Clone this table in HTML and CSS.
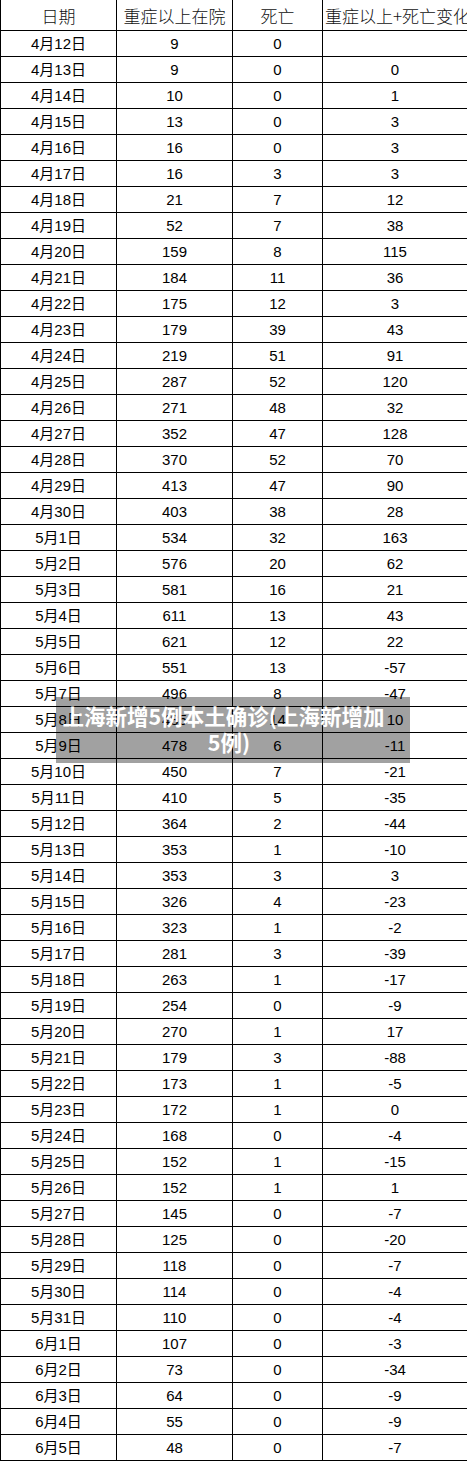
FILE: index.html
```html
<!DOCTYPE html>
<html lang="zh">
<head>
<meta charset="utf-8">
<link rel="stylesheet" href="styles.css">
</head>
<body>
<div class="page">
<table class="data">
<colgroup><col class="c1"><col class="c2"><col class="c3"><col class="c4"></colgroup>
<thead>
<tr><th>日期</th><th>重症以上在院</th><th>死亡</th><th class="last"><div class="clip">重症以上+死亡变化</div></th></tr>
</thead>
<tbody>
<tr><td>4月12日</td><td>9</td><td>0</td><td></td></tr>
<tr><td>4月13日</td><td>9</td><td>0</td><td>0</td></tr>
<tr><td>4月14日</td><td>10</td><td>0</td><td>1</td></tr>
<tr><td>4月15日</td><td>13</td><td>0</td><td>3</td></tr>
<tr><td>4月16日</td><td>16</td><td>0</td><td>3</td></tr>
<tr><td>4月17日</td><td>16</td><td>3</td><td>3</td></tr>
<tr><td>4月18日</td><td>21</td><td>7</td><td>12</td></tr>
<tr><td>4月19日</td><td>52</td><td>7</td><td>38</td></tr>
<tr><td>4月20日</td><td>159</td><td>8</td><td>115</td></tr>
<tr><td>4月21日</td><td>184</td><td>11</td><td>36</td></tr>
<tr><td>4月22日</td><td>175</td><td>12</td><td>3</td></tr>
<tr><td>4月23日</td><td>179</td><td>39</td><td>43</td></tr>
<tr><td>4月24日</td><td>219</td><td>51</td><td>91</td></tr>
<tr><td>4月25日</td><td>287</td><td>52</td><td>120</td></tr>
<tr><td>4月26日</td><td>271</td><td>48</td><td>32</td></tr>
<tr><td>4月27日</td><td>352</td><td>47</td><td>128</td></tr>
<tr><td>4月28日</td><td>370</td><td>52</td><td>70</td></tr>
<tr><td>4月29日</td><td>413</td><td>47</td><td>90</td></tr>
<tr><td>4月30日</td><td>403</td><td>38</td><td>28</td></tr>
<tr><td>5月1日</td><td>534</td><td>32</td><td>163</td></tr>
<tr><td>5月2日</td><td>576</td><td>20</td><td>62</td></tr>
<tr><td>5月3日</td><td>581</td><td>16</td><td>21</td></tr>
<tr><td>5月4日</td><td>611</td><td>13</td><td>43</td></tr>
<tr><td>5月5日</td><td>621</td><td>12</td><td>22</td></tr>
<tr><td>5月6日</td><td>551</td><td>13</td><td>-57</td></tr>
<tr><td>5月7日</td><td>496</td><td>8</td><td>-47</td></tr>
<tr><td>5月8日</td><td>485</td><td>14</td><td>10</td></tr>
<tr><td>5月9日</td><td>478</td><td>6</td><td>-11</td></tr>
<tr><td>5月10日</td><td>450</td><td>7</td><td>-21</td></tr>
<tr><td>5月11日</td><td>410</td><td>5</td><td>-35</td></tr>
<tr><td>5月12日</td><td>364</td><td>2</td><td>-44</td></tr>
<tr><td>5月13日</td><td>353</td><td>1</td><td>-10</td></tr>
<tr><td>5月14日</td><td>353</td><td>3</td><td>3</td></tr>
<tr><td>5月15日</td><td>326</td><td>4</td><td>-23</td></tr>
<tr><td>5月16日</td><td>323</td><td>1</td><td>-2</td></tr>
<tr><td>5月17日</td><td>281</td><td>3</td><td>-39</td></tr>
<tr><td>5月18日</td><td>263</td><td>1</td><td>-17</td></tr>
<tr><td>5月19日</td><td>254</td><td>0</td><td>-9</td></tr>
<tr><td>5月20日</td><td>270</td><td>1</td><td>17</td></tr>
<tr><td>5月21日</td><td>179</td><td>3</td><td>-88</td></tr>
<tr><td>5月22日</td><td>173</td><td>1</td><td>-5</td></tr>
<tr><td>5月23日</td><td>172</td><td>1</td><td>0</td></tr>
<tr><td>5月24日</td><td>168</td><td>0</td><td>-4</td></tr>
<tr><td>5月25日</td><td>152</td><td>1</td><td>-15</td></tr>
<tr><td>5月26日</td><td>152</td><td>1</td><td>1</td></tr>
<tr><td>5月27日</td><td>145</td><td>0</td><td>-7</td></tr>
<tr><td>5月28日</td><td>125</td><td>0</td><td>-20</td></tr>
<tr><td>5月29日</td><td>118</td><td>0</td><td>-7</td></tr>
<tr><td>5月30日</td><td>114</td><td>0</td><td>-4</td></tr>
<tr><td>5月31日</td><td>110</td><td>0</td><td>-4</td></tr>
<tr><td>6月1日</td><td>107</td><td>0</td><td>-3</td></tr>
<tr><td>6月2日</td><td>73</td><td>0</td><td>-34</td></tr>
<tr><td>6月3日</td><td>64</td><td>0</td><td>-9</td></tr>
<tr><td>6月4日</td><td>55</td><td>0</td><td>-9</td></tr>
<tr><td>6月5日</td><td>48</td><td>0</td><td>-7</td></tr>
</tbody>
</table>
<div class="caption"><div class="line1">上海新增5例本土确诊(上海新增加</div><div class="line2">5例)</div></div>
</div>
</body>
</html>
```

FILE: styles.css
```css
html, body {
  margin: 0;
  padding: 0;
  background: #ffffff;
}

.page {
  position: relative;
  width: 467px;
  height: 1461px;
  overflow: hidden;
}

.data {
  border-collapse: collapse;
  table-layout: fixed;
  width: 467px;
  font-family: "Liberation Sans", "Noto Sans CJK SC", sans-serif;
  font-size: 15px;
  color: #000;
}

.c1 { width: 116px; }
.c2 { width: 116px; }
.c3 { width: 90px; }
.c4 { width: 145px; }

.data th,
.data td {
  border: 1px solid #000;
  padding: 1px 0 0 0;
  text-align: center;
  vertical-align: middle;
  line-height: 18px;
}

.data thead tr { height: 30px; }
.data tbody tr { height: 26px; }

.data th {
  border-top: none;
  padding-top: 2px;
  font-family: "Noto Sans CJK SC", sans-serif;
  font-weight: 300;
  font-size: 17px;
  color: #111;
}

.data th.last {
  text-align: left;
  overflow: hidden;
}

.clip {
  white-space: nowrap;
  overflow: hidden;
  padding-left: 2px;
}

.caption {
  position: absolute;
  left: 56px;
  top: 697px;
  width: 354px;
  height: 66px;
  box-sizing: border-box;
  padding-top: 6px;
  background: rgba(0, 0, 0, 0.37);
  color: #fff;
  font-family: "Noto Sans CJK SC", sans-serif;
  font-weight: 700;
  font-size: 21.5px;
  line-height: 26px;
  text-align: center;
}

.line1 { padding-right: 19px; white-space: nowrap; }
.line2 { padding-right: 8px; }
```
